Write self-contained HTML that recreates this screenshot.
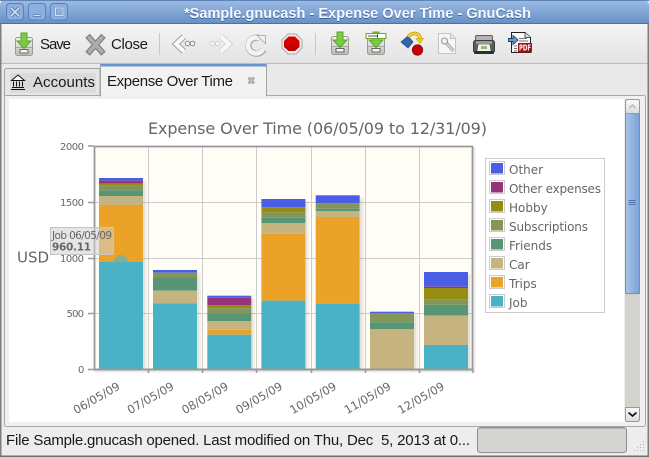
<!DOCTYPE html>
<html><head><meta charset="utf-8"><title>Expense Over Time - GnuCash</title>
<style>
html,body{margin:0;padding:0;background:#ededed;overflow:hidden}
svg{display:block}
.ui{font-family:"Liberation Sans",sans-serif;font-size:15px;fill:#1a1a1a}
.c{font-family:"DejaVu Sans",sans-serif;fill:#666}
</style></head><body>
<svg width="649" height="457" viewBox="0 0 649 457" xmlns="http://www.w3.org/2000/svg">
<defs>
<linearGradient id="tb" x1="0" y1="0" x2="0" y2="1"><stop offset="0" stop-color="#9dbbe3"/><stop offset="1" stop-color="#658fc6"/></linearGradient>
<linearGradient id="bar" x1="0" y1="0" x2="0" y2="1"><stop offset="0" stop-color="#f4f4f4"/><stop offset="1" stop-color="#e3e3e3"/></linearGradient>
<linearGradient id="cab" x1="0" y1="0" x2="0" y2="1"><stop offset="0" stop-color="#f4f4f4"/><stop offset="1" stop-color="#bdbdb5"/></linearGradient>
<linearGradient id="thumb" x1="0" y1="0" x2="1" y2="0"><stop offset="0" stop-color="#a9c5e8"/><stop offset="1" stop-color="#7aa2d8"/></linearGradient>
<linearGradient id="btn" x1="0" y1="0" x2="0" y2="1"><stop offset="0" stop-color="#fbfbfb"/><stop offset="1" stop-color="#dcdcdc"/></linearGradient>
<linearGradient id="red" x1="0" y1="0" x2="0" y2="1"><stop offset="0" stop-color="#e60000"/><stop offset="1" stop-color="#b80000"/></linearGradient>
<clipPath id="hl"><rect x="105" y="250" width="32" height="12"/></clipPath>
<g id="cabinet">
<rect x="15.500" y="37.500" width="17" height="18" rx="2" fill="url(#cab)" stroke="#9a9a94"/>
<path d="M16 47.500h16" stroke="#a8a8a2" fill="none"/>
<rect x="20" y="49.500" width="8" height="3.500" fill="#f7f7f7" stroke="#666"/>
<path d="M21 33h6v8h4l-7 7.500-7-7.500h4z" fill="#7ccb42" stroke="#57a62c"/>
</g>
</defs>

<!-- window base -->
<rect width="649" height="457" fill="#ededed"/>
<rect x="0" y="24" width="649" height="40" fill="url(#bar)"/>
<rect x="0" y="63" width="649" height="1" fill="#bcbcbc"/>
<rect x="0" y="64" width="649" height="32" fill="#e9e9e9"/>

<!-- title bar -->
<path d="M0 24V6Q0 0 6 0H643Q649 0 649 6V24Z" fill="url(#tb)"/>
<rect x="0" y="0" width="649" height="1" fill="#5f84b8"/>
<rect x="0" y="23" width="649" height="1" fill="#4f719f"/>
<g fill="#8cafdd" stroke="#5b80b4">
<rect x="6.500" y="3.500" width="17" height="16.500" rx="3"/>
<rect x="28.500" y="3.500" width="17" height="16.500" rx="3"/>
<rect x="50.500" y="3.500" width="17" height="16.500" rx="3"/>
</g>
<g stroke="#4f75aa" fill="none" stroke-width="3.400">
<path d="M11 8l8 8M19 8l-8 8"/>
<path d="M33 15.500h8" stroke-width="3"/>
</g>
<g stroke="#d4e1f3" fill="none" stroke-width="1.300">
<path d="M11 8l8 8M19 8l-8 8" stroke-width="1.700"/>
<path d="M33.500 15.500h7" stroke-width="1.400"/>
<rect x="55.500" y="8" width="7.500" height="7.500" stroke="#4f75aa" stroke-width="2"/>
<rect x="55.500" y="8" width="7.500" height="7.500"/>
</g>
<text x="184" y="18" textLength="347" lengthAdjust="spacing" style="font-family:'Liberation Sans',sans-serif;font-weight:bold;font-size:14.5px" fill="#3f628f" dy="1">*Sample.gnucash - Expense Over Time - GnuCash</text>
<text x="184" y="18" textLength="347" lengthAdjust="spacing" style="font-family:'Liberation Sans',sans-serif;font-weight:bold;font-size:14.500px" fill="#f6f9fd">*Sample.gnucash - Expense Over Time - GnuCash</text>

<!-- toolbar -->
<use href="#cabinet"/>
<text class="ui" x="40" y="49" textLength="31" lengthAdjust="spacing">Save</text>
<path d="M89.500 38L101.500 51.500M101.500 38L89.500 51.500" stroke="#838383" stroke-width="6" fill="none" stroke-linecap="square"/>
<path d="M89.500 38L101.500 51.500M101.500 38L89.500 51.500" stroke="#adadad" stroke-width="3.500" fill="none" stroke-linecap="square"/>
<text class="ui" x="111" y="49" textLength="37" lengthAdjust="spacing">Close</text>
<rect x="159" y="33" width="1" height="22" fill="#c8c8c8"/>

<!-- back -->
<path d="M184 36.500L176 44L184 51.500" fill="none" stroke="#9f9f9f" stroke-width="6"/>
<path d="M184 36.500L176 44L184 51.500" fill="none" stroke="#f8f8f8" stroke-width="4"/>
<g fill="#f4f4f4" stroke="#8a8a8a"><circle cx="187.500" cy="43.500" r="2.300"/><circle cx="192.500" cy="43.500" r="2.300"/></g>
<!-- forward -->
<path d="M221 36.500L229 44L221 51.500" fill="none" stroke="#d4d4d4" stroke-width="6"/>
<path d="M221 36.500L229 44L221 51.500" fill="none" stroke="#f8f8f8" stroke-width="4"/>
<g fill="#f6f6f6" stroke="#cfcfcf"><circle cx="212.500" cy="43.500" r="2.300"/><circle cx="217.500" cy="43.500" r="2.300"/></g>
<!-- reload -->
<path d="M263.500 49.500A8 8 0 1 1 260 38.500" fill="none" stroke="#b0b0b0" stroke-width="6.500"/>
<path d="M263 49.200A8 8 0 1 1 260 38.500" fill="none" stroke="#f4f4f4" stroke-width="4.500"/>
<path d="M257 35.500H265.500V43.500Z" fill="#f4f4f4" stroke="#b0b0b0"/>
<!-- stop -->
<polygon points="288,34 296,34 302,40 302,48 296,54 288,54 282,48 282,40" fill="#f0f0f0" stroke="#a8a8a8"/>
<polygon points="288.500,36.500 295,36.500 299.500,41 299.500,47 295,51 288.500,51 284,47 284,41" fill="url(#red)"/>
<rect x="315" y="33" width="1" height="22" fill="#c8c8c8"/>

<use href="#cabinet" x="316" y="-1"/>
<!-- second cabinet -->
<use href="#cabinet" x="352" y="-1"/>
<rect x="366" y="33.500" width="20" height="5" fill="#fff" stroke="#66aa22"/>
<rect x="368" y="35" width="10" height="2" fill="#aaa"/>
<rect x="377" y="34.500" width="1" height="3" fill="#222"/>

<!-- scenario icon -->
<polygon points="401,42 408,36 413,42 408,48" fill="#3465a4" stroke="#204a87" stroke-width=".7"/>
<path d="M408 36.500Q412 33 416 33.500Q420 34.500 420 39" fill="none" stroke="#c4a000" stroke-width="3.500"/>
<path d="M408 36.500Q412 33 416 33.500Q420 34.500 420 39" fill="none" stroke="#f5d94a" stroke-width="1.800"/>
<polygon points="416,38.500 423.500,38.500 420,43.500" fill="#edd400" stroke="#c4a000" stroke-width=".6"/>
<circle cx="417.500" cy="50" r="5.200" fill="#cc0000" stroke="#7c0f0f" stroke-width=".8"/>

<!-- document wrench -->
<path d="M438.500 33.500H450.500L455.500 38.500V53.500H438.500Z" fill="#f6f6f6" stroke="#c4c4c4"/>
<path d="M450.500 33.500V38.500H455.500" fill="#e3e3e3" stroke="#c4c4c4"/>
<path d="M445 41.500L453.500 51" stroke="#a6a6a6" stroke-width="3.200" fill="none"/>
<path d="M445 41.500L453.500 51" stroke="#e8e8e8" stroke-width="1.200" fill="none"/>
<circle cx="444.500" cy="41" r="3" fill="#f6f6f6" stroke="#a6a6a6" stroke-width="1.300"/>

<!-- printer -->
<rect x="475.500" y="35.500" width="17" height="9" rx="1.500" fill="#b4b4b4" stroke="#5d5d5d"/>
<rect x="473.500" y="40.500" width="21" height="12" rx="2" fill="#5c5c5c" stroke="#3a3a3a"/>
<rect x="476" y="41" width="16" height="3" fill="#999"/>
<path d="M478.500 44.500H489.500L490.500 51.500H477.500Z" fill="#eef3ea" stroke="#d5d5d5" stroke-width=".5"/>
<rect x="481" y="46" width="6" height="3" fill="#8fbf7a"/>
<rect x="474" y="51" width="20" height="3" rx="1" fill="#2e2e2e"/>

<!-- pdf -->
<path d="M511.500 32.500H525L530.500 37.500V52.500H511.500Z" fill="#fbfbfb" stroke="#222"/>
<path d="M525 32.500V37.500H530.500" fill="#ddd" stroke="#333" stroke-width=".8"/>
<g stroke="#777" stroke-width="1"><path d="M519 38.500h8M519 41h9M514 46h3M514 48.500h3M514 51h3"/></g>
<path d="M508.500 38.500h4.500v-3l5 4.500-5 4.500v-3h-4.500z" fill="#6d9bcb" stroke="#1f3f66" stroke-width=".9"/>
<rect x="518" y="43" width="14" height="9.500" fill="#a40f14"/>
<text x="519" y="50.500" textLength="12" lengthAdjust="spacingAndGlyphs" style="font-family:'DejaVu Sans',sans-serif;font-weight:bold;font-size:7.500px" fill="#fff">PDF</text>

<!-- tabs -->
<path d="M4.500 96V71Q4.500 68.500 7 68.500H100V96Z" fill="#e6e6e6" stroke="#a3a3a3"/>
<rect x="10" y="73" width="86" height="20" fill="#dbdbdb"/>
<g stroke="#111" fill="#fff" stroke-width="1">
<path d="M11.500 80.500L18 75L24.500 80.500Z"/>
<path d="M13.500 81.500v5M16.500 81.500v5M19.500 81.500v5M22.500 81.500v5" fill="none"/>
<path d="M12 87.500h12M11 89.500h14" fill="none"/>
</g>
<text class="ui" x="33" y="87" textLength="62" lengthAdjust="spacing">Accounts</text>

<rect x="4.500" y="95.500" width="641" height="331" fill="#f0f0f0" stroke="#a8a8a8" rx="2"/>
<path d="M100.500 96V67Q100.500 64.500 103 64.500H263Q266.500 64.500 266.500 67V96Z" fill="#f2f2f2" stroke="#a3a3a3"/>
<path d="M100.500 66.500V67Q100.500 64 103 64H263Q266.500 64 266.500 67V66.500Z" fill="#6b94c9"/>
<rect x="100" y="64" width="167" height="1.500" rx="1" fill="#6b94c9"/>
<rect x="101" y="94" width="165" height="3" fill="#f0f0f0"/>
<text class="ui" x="107" y="86" textLength="126" lengthAdjust="spacing">Expense Over Time</text>
<path d="M248.500 77.500L254 83.500M254 77.500L248.500 83.500" stroke="#8a8f8a" stroke-width="2.600" fill="none"/>
<path d="M248.500 77.500L254 83.500M254 77.500L248.500 83.500" stroke="#c8ccc8" stroke-width="1" fill="none"/>

<!-- content -->
<rect x="9" y="99" width="615" height="323" fill="#fff"/>

<!-- plot -->
<rect x="94.500" y="146" width="378" height="223.500" fill="#fffdf6"/>
<g stroke="#cccccc" stroke-width="1">
<path d="M148.500 146V369M202.500 146V369M256.500 146V369M311.500 146V369M365.500 146V369M419.500 146V369"/>
<path d="M95 202.500H472M95 258.500H472M95 313.500H472"/>
</g>
<!-- shadows -->
<g fill="#000" fill-opacity=".05">
<rect x="143" y="180" width="4" height="189"/><rect x="197" y="272" width="4" height="97"/><rect x="251" y="298" width="4" height="71"/><rect x="305" y="201" width="4" height="168"/><rect x="360" y="197" width="4" height="172"/><rect x="414" y="314" width="4" height="55"/><rect x="468" y="274" width="3" height="95"/>
<rect x="143" y="182" width="2" height="187"/><rect x="197" y="274" width="2" height="95"/><rect x="251" y="300" width="2" height="69"/><rect x="305" y="203" width="2" height="166"/><rect x="360" y="199" width="2" height="170"/><rect x="414" y="316" width="2" height="53"/><rect x="468" y="276" width="2" height="93"/>
</g>

<!-- bar 1 -->
<rect x="99" y="178" width="44" height="2.700" fill="#4b5de4"/>
<rect x="99" y="180.700" width="44" height="3" fill="#953579"/>
<rect x="99" y="183.700" width="44" height="1.700" fill="#958c12"/>
<rect x="99" y="185.300" width="44" height="5" fill="#839557"/>
<rect x="99" y="190.300" width="44" height="5.700" fill="#579575"/>
<rect x="99" y="196" width="44" height="9" fill="#c5b47f"/>
<rect x="99" y="205" width="44" height="57" fill="#eaa228"/>
<rect x="99" y="262" width="44" height="107.500" fill="#4bb2c5"/>
<!-- bar 2 -->
<rect x="153" y="270" width="44" height="2.700" fill="#4b5de4"/>
<rect x="153" y="272.700" width="44" height="4.800" fill="#839557"/>
<rect x="153" y="277.500" width="44" height="13.200" fill="#579575"/>
<rect x="153" y="290.700" width="44" height="12.600" fill="#c5b47f"/>
<rect x="153" y="303.300" width="44" height="66.200" fill="#4bb2c5"/>
<!-- bar 3 -->
<rect x="207.300" y="295.700" width="44" height="2" fill="#4b5de4"/>
<rect x="207.300" y="297.700" width="44" height="7.300" fill="#953579"/>
<rect x="207.300" y="305" width="44" height="3.300" fill="#958c12"/>
<rect x="207.300" y="308.300" width="44" height="5" fill="#839557"/>
<rect x="207.300" y="313.300" width="44" height="8" fill="#579575"/>
<rect x="207.300" y="321.300" width="44" height="8.400" fill="#c5b47f"/>
<rect x="207.300" y="329.700" width="44" height="5" fill="#eaa228"/>
<rect x="207.300" y="334.700" width="44" height="34.800" fill="#4bb2c5"/>
<!-- bar 4 -->
<rect x="261.400" y="199" width="44" height="8.300" fill="#4b5de4"/>
<rect x="261.400" y="207.300" width="44" height="5" fill="#958c12"/>
<rect x="261.400" y="212.300" width="44" height="5.400" fill="#839557"/>
<rect x="261.400" y="217.700" width="44" height="5.300" fill="#579575"/>
<rect x="261.400" y="223" width="44" height="10.700" fill="#c5b47f"/>
<rect x="261.400" y="233.700" width="44" height="67" fill="#eaa228"/>
<rect x="261.400" y="300.700" width="44" height="68.800" fill="#4bb2c5"/>
<!-- bar 5 -->
<rect x="315.700" y="195.300" width="44" height="8" fill="#4b5de4"/>
<rect x="315.700" y="203.300" width="44" height="5.400" fill="#839557"/>
<rect x="315.700" y="208.700" width="44" height="2.300" fill="#579575"/>
<rect x="315.700" y="211" width="44" height="6" fill="#c5b47f"/>
<rect x="315.700" y="217" width="44" height="86.700" fill="#eaa228"/>
<rect x="315.700" y="303.700" width="44" height="65.800" fill="#4bb2c5"/>
<!-- bar 6 -->
<rect x="370" y="311.700" width="44" height="1.300" fill="#4b5de4"/>
<rect x="370" y="313" width="44" height="9.300" fill="#839557"/>
<rect x="370" y="322.300" width="44" height="6.700" fill="#579575"/>
<rect x="370" y="329" width="44" height="40.500" fill="#c5b47f"/>
<!-- bar 7 -->
<rect x="424" y="272" width="44" height="14.700" fill="#4b5de4"/>
<rect x="424" y="286.700" width="44" height="1.300" fill="#953579"/>
<rect x="424" y="288" width="44" height="11.300" fill="#958c12"/>
<rect x="424" y="299.300" width="44" height="5.400" fill="#839557"/>
<rect x="424" y="304.700" width="44" height="11" fill="#579575"/>
<rect x="424" y="315.700" width="44" height="29.300" fill="#c5b47f"/>
<rect x="424" y="345" width="44" height="24.500" fill="#4bb2c5"/>

<!-- plot border -->
<path d="M94.500 369.500V146.500H472.500V369.500" fill="none" stroke="#999" stroke-width="1.800"/>
<rect x="93.500" y="368.500" width="380" height="2" fill="#999"/>
<rect x="94" y="370.500" width="380" height="2" fill="#ececec"/>
<rect x="473.500" y="147" width="2" height="225" fill="#ececec"/>
<g stroke="#999" stroke-width="1.500">
<path d="M88 146H94M88 202.500H94M88 258.500H94M88 313.500H94M88 369.500H94"/>
<path d="M148.500 370V373M202.500 370V373M256.500 370V373M311.500 370V373M365.500 370V373M419.500 370V373M473 370V373"/>
</g>

<!-- y labels -->
<g class="c" style="font-size:10px">
<text x="60" y="150" textLength="24" lengthAdjust="spacing">2000</text>
<text x="60" y="206" textLength="24" lengthAdjust="spacing">1500</text>
<text x="60" y="262" textLength="24" lengthAdjust="spacing">1000</text>
<text x="66.500" y="317" textLength="17.500" lengthAdjust="spacing">500</text>
<text x="78" y="373" textLength="6" lengthAdjust="spacing">0</text>
</g>
<text class="c" x="17" y="262.500" style="font-size:15px">USD</text>
<text class="c" x="148" y="134" textLength="339" lengthAdjust="spacing" style="font-size:16px">Expense Over Time (06/05/09 to 12/31/09)</text>

<!-- x labels -->
<g class="c" style="font-size:11.500px" text-anchor="middle">
<text transform="translate(96.500 398) rotate(-30)" y="4">06/05/09</text>
<text transform="translate(150.500 398) rotate(-30)" y="4">07/05/09</text>
<text transform="translate(205 398) rotate(-30)" y="4">08/05/09</text>
<text transform="translate(259 398) rotate(-30)" y="4">09/05/09</text>
<text transform="translate(313 398) rotate(-30)" y="4">10/05/09</text>
<text transform="translate(367.500 398) rotate(-30)" y="4">11/05/09</text>
<text transform="translate(421 398) rotate(-30)" y="4">12/05/09</text>
</g>

<!-- highlight + tooltip -->
<circle cx="121" cy="262" r="7" fill="#8aae8c" clip-path="url(#hl)"/>
<rect x="50.500" y="227.500" width="63" height="27" fill="#d0d0d0" fill-opacity=".55" stroke="#c4c4c4"/>
<text class="c" x="52" y="239" textLength="60" lengthAdjust="spacing" style="font-size:10.500px">Job 06/05/09</text>
<text class="c" x="52" y="250.500" textLength="39" lengthAdjust="spacing" style="font-size:10.500px;font-weight:bold">960.11</text>

<!-- legend -->
<rect x="485.500" y="158.500" width="119" height="154" fill="#fff" stroke="#cccccc"/>
<g fill="#fff" stroke="#cccccc">
<rect x="489.500" y="161.500" width="15" height="13"/>
<rect x="489.500" y="180.500" width="15" height="13"/>
<rect x="489.500" y="199.500" width="15" height="13"/>
<rect x="489.500" y="218.500" width="15" height="13"/>
<rect x="489.500" y="237.500" width="15" height="13"/>
<rect x="489.500" y="256.500" width="15" height="13"/>
<rect x="489.500" y="275.500" width="15" height="13"/>
<rect x="489.500" y="294.500" width="15" height="13"/>
</g>
<rect x="491" y="163" width="12" height="10.500" fill="#4b5de4"/>
<rect x="491" y="182" width="12" height="10.500" fill="#953579"/>
<rect x="491" y="201" width="12" height="10.500" fill="#958c12"/>
<rect x="491" y="220" width="12" height="10.500" fill="#839557"/>
<rect x="491" y="239" width="12" height="10.500" fill="#579575"/>
<rect x="491" y="258" width="12" height="10.500" fill="#c5b47f"/>
<rect x="491" y="277" width="12" height="10.500" fill="#eaa228"/>
<rect x="491" y="296" width="12" height="10.500" fill="#4bb2c5"/>
<g class="c" style="font-size:12px">
<text x="509" y="174">Other</text>
<text x="509" y="193" textLength="92" lengthAdjust="spacing">Other expenses</text>
<text x="509" y="212">Hobby</text>
<text x="509" y="231" textLength="79" lengthAdjust="spacing">Subscriptions</text>
<text x="509" y="250">Friends</text>
<text x="509" y="269">Car</text>
<text x="509" y="288">Trips</text>
<text x="509" y="307">Job</text>
</g>

<!-- scrollbar -->
<rect x="625" y="99" width="15" height="322" fill="#d4d2cd"/>
<rect x="625.500" y="113.500" width="14" height="180" fill="url(#thumb)" stroke="#6a92c8"/>
<path d="M628.500 200.500h7M628.500 202.500h7M628.500 204.500h7" stroke="#4f76ac"/>
<path d="M625.500 113.500V102Q625.500 99.500 628 99.500H637Q639.500 99.500 639.500 102V113.500Z" fill="url(#btn)" stroke="#999"/>
<path d="M629.500 108L632.500 105L635.500 108" fill="none" stroke="#b5b5b5" stroke-width="1.500"/>
<path d="M625.500 407.500H639.500V419Q639.500 421.500 637 421.500H628Q625.500 421.500 625.500 419Z" fill="url(#btn)" stroke="#999"/>
<path d="M628.500 412.500L632.500 416L636.500 412.500" fill="none" stroke="#111" stroke-width="1.700"/>

<!-- status bar -->
<text class="ui" x="6" y="445" textLength="464" lengthAdjust="spacing">File Sample.gnucash opened. Last modified on Thu, Dec&#160; 5, 2013 at 0...</text>
<rect x="477.500" y="427.500" width="149" height="25" rx="3" fill="#d4d4d2" stroke="#8e8e8e"/>
<rect x="479" y="428" width="146" height="1" fill="#b4b4b2"/>
<g fill="#b5b5b5">
<rect x="643" y="441" width="1" height="1"/><rect x="643" y="444" width="1" height="1"/><rect x="640" y="444" width="1" height="1"/><rect x="643" y="447" width="1" height="1"/><rect x="640" y="447" width="1" height="1"/><rect x="637" y="447" width="1" height="1"/><rect x="643" y="450" width="1" height="1"/><rect x="640" y="450" width="1" height="1"/><rect x="637" y="450" width="1" height="1"/><rect x="634" y="450" width="1" height="1"/>
</g>

<!-- outer border -->
<rect x="0" y="24" width="1.500" height="433" fill="#7f7f7f"/>
<rect x="647.500" y="24" width="1.500" height="433" fill="#7f7f7f"/>
<rect x="0" y="455.500" width="649" height="1.500" fill="#6f6f6f"/>
</svg>
</body></html>
